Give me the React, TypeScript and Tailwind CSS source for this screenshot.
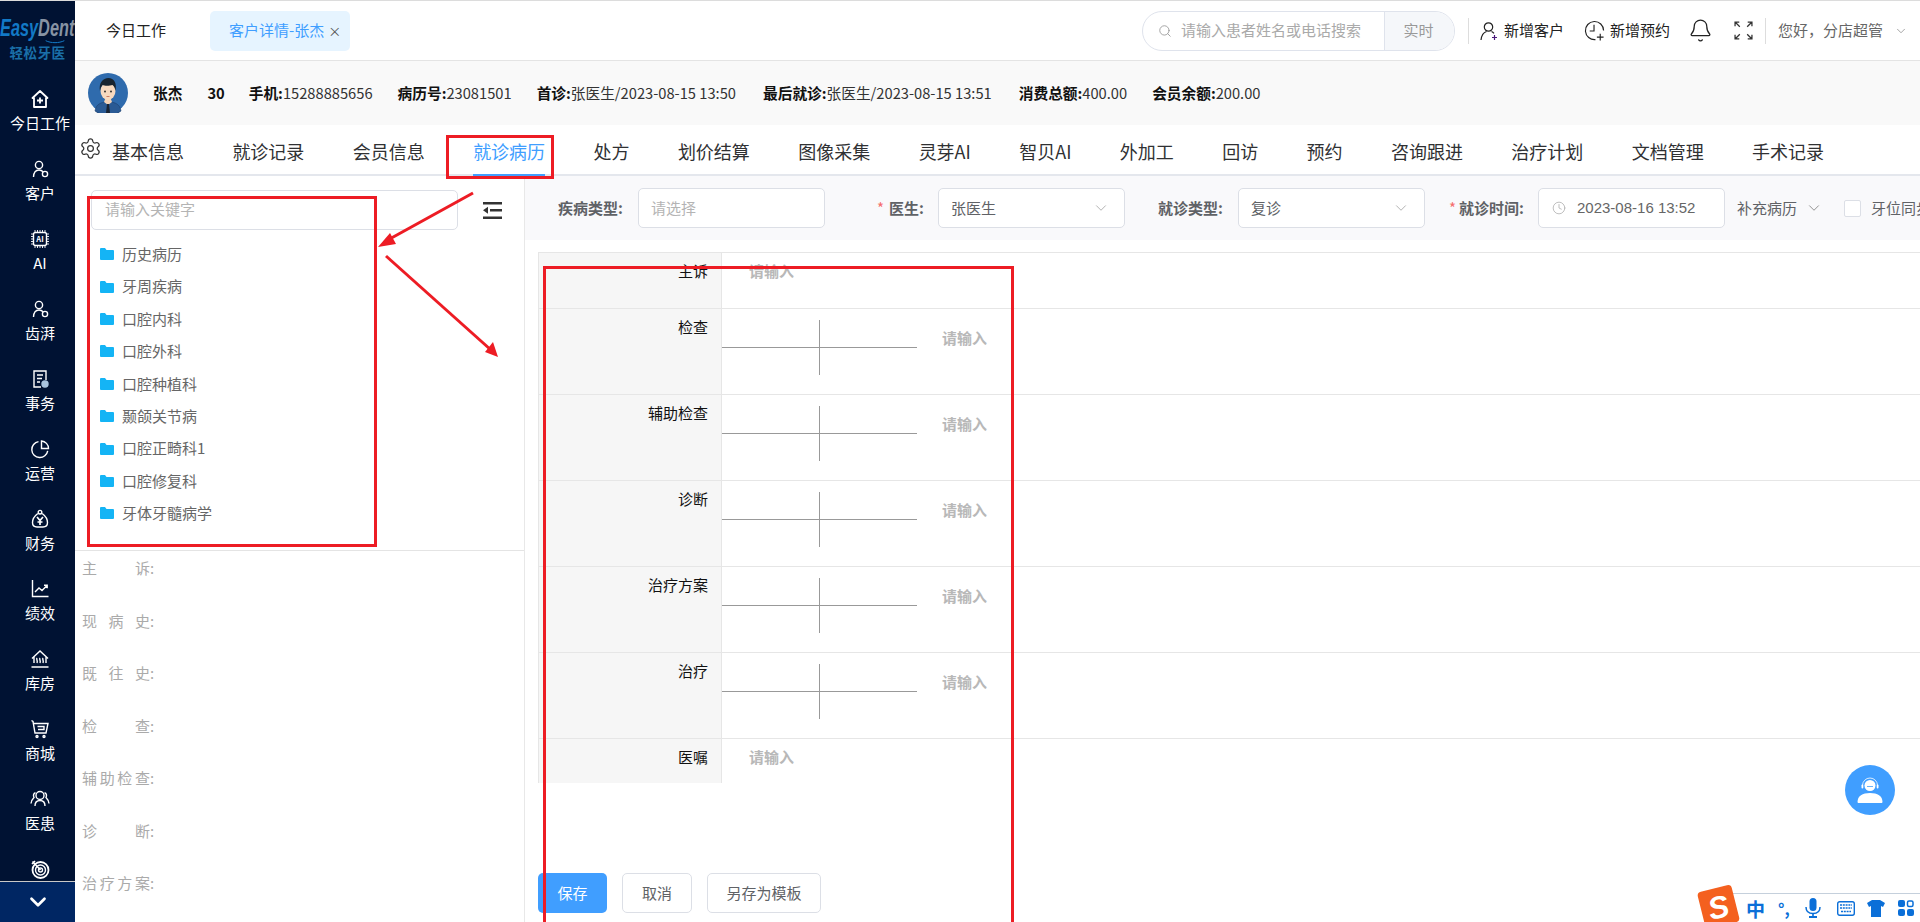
import { Bell, ChevronDown, Clock, Search, Settings } from "lucide-react";
import type { ReactNode } from "react";

const ico = "w-5 h-5 fill-none stroke-white stroke-[1.4]";

const icons: Record<string, ReactNode> = {
  home: (
    <svg viewBox="0 0 20 20" className={ico}>
      <path d="M10 2 L17.5 9 H16 V18 H4 V9 H2.5 Z" strokeWidth="1.8" strokeLinejoin="round" />
      <path d="M10 8.5v6M7 11.5h6" strokeWidth="1.8" />
    </svg>
  ),
  user: (
    <svg viewBox="0 0 20 20" className={ico}>
      <circle cx="9" cy="6" r="3.6" />
      <path d="M3.5 18c.2-4 2.2-7 5.5-7 2 0 3.2.8 4 1.8" />
      <circle cx="15" cy="15" r="2.6" />
    </svg>
  ),
  ai: (
    <svg viewBox="0 0 20 20" className={ico}>
      <rect x="3.5" y="3.5" width="13" height="13" rx="2" />
      <path
        d="M5 1v2M7.5 1v2M10 1v2M12.5 1v2M15 1v2M5 17v2M7.5 17v2M10 17v2M12.5 17v2M15 17v2M1 5h2M1 7.5h2M1 10h2M1 12.5h2M1 15h2M17 5h2M17 7.5h2M17 10h2M17 12.5h2M17 15h2"
        strokeWidth="0.9"
      />
      <text x="10" y="12.7" textAnchor="middle" className="fill-white stroke-0 font-bold text-[7.5px]">
        AI
      </text>
    </svg>
  ),
  doc: (
    <svg viewBox="0 0 20 20" className={ico}>
      <path d="M11 18H4V2h12v9" />
      <path d="M7 6h6M7 9.5h5M7 13h3" />
      <circle cx="15" cy="15" r="3" className="fill-[#a9c4e0] stroke-[#a9c4e0]" />
    </svg>
  ),
  pie: (
    <svg viewBox="0 0 20 20" className={ico}>
      <path d="M8.5 2.6a8 8 0 1 0 9.2 9.2" />
      <path d="M11.5 2v7.5h7a7.5 7.5 0 0 0-7-7.5z" />
    </svg>
  ),
  bag: (
    <svg viewBox="0 0 20 20" className={ico}>
      <circle cx="10" cy="3.2" r="1.8" />
      <path d="M7.8 4.5C4.5 7 2.5 10 2.5 13.5 2.5 17 4.5 18 7 18h6c2.500 0 4.500-1 4.500-4.500 0-3.500-2-6.500-5.300-9" />
      <path d="M7 8l3 3.500L13 8M10 11.500V16M7.500 13h5" strokeWidth="1.7" />
    </svg>
  ),
  chart: (
    <svg viewBox="0 0 20 20" className={ico}>
      <path d="M2.500 1v16.500H18.500" />
      <path d="M5 13l4-4 3 2.500 5-5M14 6.200h3.200v3" />
    </svg>
  ),
  store: (
    <svg viewBox="0 0 20 20" className={ico}>
      <path d="M2 9.500 10 2l8 7.500M4 8v6M16 8v6M1.500 18h17" />
      <path d="M7 9c-1 1.500 1 2.500 0 5M10 9c-1 1.500 1 2.500 0 5M13 9c-1 1.500 1 2.500 0 5" />
    </svg>
  ),
  cart: (
    <svg viewBox="0 0 20 20" className={ico}>
      <path d="M1.500 1.500 3 2.500 5 14h11l2-9.500H4" />
      <path d="M7.500 7.500h6.500v3H8" />
      <circle cx="7" cy="17.500" r="1" />
      <circle cx="14" cy="17.500" r="1" />
    </svg>
  ),
  team: (
    <svg viewBox="0 0 20 20" className={ico}>
      <circle cx="10" cy="6.500" r="4" />
      <path d="M5 17c0-3.500 2-5.500 5-5.500s5 2 5 5.500" />
      <path d="M5.500 3.800C3.500 4.200 3 6.500 4 8.500 2.500 10 1.200 12 1 14.500M14.500 3.800c2 .4 2.500 2.700 1.500 4.700 1.500 1.500 2.800 3.500 3 6" />
    </svg>
  ),
  target: (
    <svg viewBox="0 0 20 20" className={ico}>
      <circle cx="10.500" cy="11" r="8" strokeWidth="1.800" />
      <circle cx="10.500" cy="11" r="5" />
      <circle cx="10.500" cy="11" r="2" />
      <path d="M2.500 2.500 10.500 11M2 5l3-3" strokeWidth="1.600" />
    </svg>
  ),
};

const navItems = [
  ["home", "今日工作"],
  ["user", "客户"],
  ["ai", "AI"],
  ["user", "齿湃"],
  ["doc", "事务"],
  ["pie", "运营"],
  ["bag", "财务"],
  ["chart", "绩效"],
  ["store", "库房"],
  ["cart", "商城"],
  ["team", "医患"],
];

const tabs = [
  "基本信息",
  "就诊记录",
  "会员信息",
  "就诊病历",
  "处方",
  "划价结算",
  "图像采集",
  "灵芽AI",
  "智贝AI",
  "外加工",
  "回访",
  "预约",
  "咨询跟进",
  "治疗计划",
  "文档管理",
  "手术记录",
];

const folders = ["历史病历", "牙周疾病", "口腔内科", "口腔外科", "口腔种植科", "颞颌关节病", "口腔正畸科1", "口腔修复科", "牙体牙髓病学"];
const history = ["主诉", "现病史", "既往史", "检查", "辅助检查", "诊断", "治疗方案"];
const chartRows = ["检查", "辅助检查", "诊断", "治疗方案", "治疗"];

const Sidebar = () => (
  <aside className="w-[75px] shrink-0 bg-[#001233] flex flex-col overflow-hidden">
    <div className="h-[74px] shrink-0 pt-[14px]">
      <div className="origin-left scale-x-[0.68] text-[24px] leading-[25px] font-bold italic whitespace-nowrap [font-family:'Liberation_Sans',sans-serif]">
        <span className="text-[#1279c6]">Easy</span>
        <span className="text-[#8793a3]">Dent</span>
      </div>
      <svg viewBox="0 0 30 6" className="w-[28px] h-[4px] ml-[41px] fill-none stroke-[#1279c6] stroke-[1.5]">
        <path d="M1 1c8 4 20 4 28 0" />
      </svg>
      <div className="text-[#1a6fa8] text-[13.500px] leading-[14px] font-bold text-center tracking-[0.5px] mt-[1px]">轻松牙医</div>
    </div>
    <nav className="flex-1 overflow-hidden pl-[5px]">
      {navItems.map(([icon, label]) => (
        <div key={label} className="h-[70px] flex flex-col items-center pt-[14px] text-white text-[15px]">
          {icons[icon]}
          <span className="leading-5 mt-1">{label}</span>
        </div>
      ))}
      <div className="h-[70px] flex flex-col items-center pt-[14px]">{icons.target}</div>
    </nav>
    <div className="h-[41px] shrink-0 bg-[#002663] border-t border-[#c8c8c8] flex items-center justify-center">
      <ChevronDown className="w-[26px] h-[26px] text-white" strokeWidth={2.5} />
    </div>
  </aside>
);

const Header = () => (
  <header className="h-[60px] shrink-0 border-b border-[#e4e4e4] flex items-center bg-white">
    <span className="ml-[31px] text-[15px] text-[#222] w-[104px]">今日工作</span>
    <div className="w-[140px] h-10 rounded-[5px] bg-[#e6f4ff] flex items-center pl-[19px] text-[15px] text-[#409eff]">
      客户详情-张杰
      <span className="ml-[4px] text-[#555] text-[13px] leading-none">×</span>
    </div>
    <div className="ml-[792px] w-[313px] h-10 rounded-[20px] border border-[#dfe3ec] flex overflow-hidden shrink-0">
      <div className="flex-1 flex items-center pl-[15px] text-[15px] text-[#aaa]">
        <Search className="w-[14px] h-[14px] text-[#999] mr-[9px]" strokeWidth={1.5} />
        请输入患者姓名或电话搜索
      </div>
      <div className="w-[70px] bg-[#f5f7fa] border-l border-[#dfe3ec] text-[15px] text-[#999] flex items-center justify-center pr-[2px]">实时</div>
    </div>
    <div className="ml-[13px] w-px h-[26px] bg-[#ddd]" />
    <svg viewBox="0 0 20 20" className="ml-[10px] w-5 h-5 fill-none stroke-[#222] stroke-[1.2] shrink-0">
      <circle cx="9.500" cy="6" r="4.200" />
      <path d="M2 19c.5-4.500 2.500-7.500 5.500-8.500M12.500 10.500c1 .4 1.800 1 2.500 1.800" />
      <path d="M15.500 14v5M13 16.500h5" className="stroke-[#4b1a7a]" />
    </svg>
    <span className="ml-[5px] text-[15px] text-[#222] whitespace-nowrap">新增客户</span>
    <svg viewBox="0 0 22 22" className="ml-[20px] w-[21px] h-[21px] fill-none stroke-[#222] stroke-[1.2] shrink-0">
      <path d="M12 20.500A9.500 9.500 0 1 1 20.500 11" />
      <path d="M10.500 5v6.500H6M17 14.500v7M13.500 18h7" />
    </svg>
    <span className="ml-[5px] text-[15px] text-[#222] whitespace-nowrap">新增预约</span>
    <Bell className="ml-[18px] w-[25px] h-[27px] text-[#222] shrink-0" strokeWidth={1.2} />
    <svg viewBox="0 0 18 18" className="ml-[21px] w-[19px] h-[19px] fill-none stroke-[#333] stroke-[1.2] shrink-0">
      <path d="M1 5V1h4M1 1l4.500 4.500M17 5V1h-4M17 1l-4.500 4.500M1 13v4h4M1 17l4.500-4.500M17 13v4h-4M17 17l-4.500-4.500" />
    </svg>
    <div className="ml-[12px] w-px h-[26px] bg-[#ddd]" />
    <span className="ml-[12px] text-[15px] text-[#666] whitespace-nowrap">您好，分店超管</span>
    <ChevronDown className="ml-[11px] w-[14px] h-[14px] text-[#888]" strokeWidth={1.3} />
  </header>
);

const Avatar = () => (
  <svg viewBox="0 0 40 40" className="w-10 h-10 shrink-0">
    <circle cx="20" cy="20" r="20" fill="#2f6bad" />
    <path d="M7 38c1-7 6-9 13-9s12 2 13 9a20 20 0 0 1-26 0z" fill="#2a5a94" stroke="#1d3f6e" strokeWidth="0.6" />
    <path d="M16 29l4 3 4-3-1.500-4h-5z" fill="#f3d3b8" />
    <path d="M19 31h2l1 9h-4z" fill="#1a2433" />
    <ellipse cx="20" cy="18" rx="7.500" ry="9" fill="#f7d9bf" />
    <path d="M12 18c-1.500-8 3-13 8.500-13 5.500 0 8.500 5 7 13-.5-3-1.500-5-3-6-3 1-8 1-10 0-1 1-2 3-2.500 6z" fill="#18242f" />
    <circle cx="17" cy="18.500" r="0.900" fill="#222" />
    <circle cx="23" cy="18.500" r="0.900" fill="#222" />
    <path d="M18.500 23.500h3" stroke="#b5533c" strokeWidth="0.700" />
  </svg>
);

const Info = ({ label, value, ml }: { label: string; value: string; ml: string }) => (
  <span className={`${ml} whitespace-nowrap`}>
    <b className="font-bold text-[#111]">{label}</b>
    <span className="text-[#333]">{value}</span>
  </span>
);

const PatientBar = () => (
  <div className="h-16 shrink-0 bg-[#f9f9f9] flex items-center pl-[13px] text-[14.700px]">
    <Avatar />
    <b className="ml-[25px] font-bold text-[#111]">张杰</b>
    <b className="ml-[25px] font-bold text-[#111]">30</b>
    <Info ml="ml-[24px]" label="手机:" value="15288885656" />
    <Info ml="ml-[25px]" label="病历号:" value="23081501" />
    <Info ml="ml-[25px]" label="首诊:" value="张医生/2023-08-15 13:50" />
    <Info ml="ml-[27px]" label="最后就诊:" value="张医生/2023-08-15 13:51" />
    <Info ml="ml-[27px]" label="消费总额:" value="400.00" />
    <Info ml="ml-[25px]" label="会员余额:" value="200.00" />
  </div>
);

const TabBar = () => (
  <div className="h-[51px] shrink-0 border-b-2 border-[#e4e7ed] flex text-[18px] text-[#303133] bg-white">
    <div className="w-[37px] flex items-center pl-[4px] pb-[2px] shrink-0">
      <Settings className="w-[23px] h-[23px] text-[#333]" strokeWidth={1.3} />
    </div>
    {tabs.map((t, i) => (
      <div
        key={t}
        className={
          i === 3
            ? "mx-[24.200px] h-[51px] whitespace-nowrap leading-[52px] text-[#409eff] border-b-2 border-[#409eff]"
            : i === 0
              ? "mr-[24.200px] h-[49px] whitespace-nowrap leading-[52px]"
              : "mx-[24.200px] h-[49px] whitespace-nowrap leading-[52px]"
        }
      >
        {t}
      </div>
    ))}
  </div>
);

const Folder = () => (
  <svg viewBox="0 0 14 12" className="w-[14px] h-3 shrink-0 fill-[#14b4f5]">
    <path d="M0 1a1 1 0 0 1 1-1h4l1.500 2H13a1 1 0 0 1 1 1v8a1 1 0 0 1-1 1H1a1 1 0 0 1-1-1z" />
  </svg>
);

const LeftPanel = () => (
  <div className="w-[450px] shrink-0 border-r border-[#e8e8e8] flex flex-col">
    <div className="h-[375px] shrink-0 border-b border-[#e4e4e4] pt-[14px]">
      <div className="flex items-center pl-4">
        <div className="w-[367px] h-10 border border-[#dcdfe6] rounded-[5px] flex items-center pl-[13px] pb-[2px] text-[15px] text-[#b4b4b4]">请输入关键字</div>
        <svg viewBox="0 0 19 17" className="ml-[25px] w-[19px] h-[17px] fill-[#333] shrink-0">
          <path d="M0 0h19v2.500H0zM7 7h12v2.500H7zM0 14.500h19V17H0zM0 8.200l5-3.500v7z" />
        </svg>
      </div>
      <ul className="mt-[8px] pl-[25px]">
        {folders.map((f) => (
          <li key={f} className="h-[32.400px] flex items-center gap-2 text-[15px] text-[#666]">
            <Folder />
            {f}
          </li>
        ))}
      </ul>
    </div>
    <div className="pl-[7px] pt-[6px] flex flex-col gap-[31.500px] text-[15px] leading-[21px] text-[#aaa]">
      {history.map((h) => (
        <div key={h} className="flex">
          <span className="w-[68px] [text-align-last:justify]">{h}</span>
          <span>:</span>
        </div>
      ))}
    </div>
  </div>
);

const Field = ({ children, className }: { children: ReactNode; className: string }) => (
  <div className={`h-10 shrink-0 bg-white border border-[#dcdfe6] rounded-[5px] flex items-center pl-[12px] text-[15px] ${className}`}>{children}</div>
);

const FormBar = () => (
  <div className="h-16 shrink-0 bg-[#f9f9fb] flex items-center whitespace-nowrap overflow-hidden text-[15px] text-[#606266]">
    <span className="ml-[33px] w-[64px] shrink-0 font-bold">疾病类型:</span>
    <Field className="ml-4 w-[187px] text-[#b4b4b4]">请选择</Field>
    <span className="ml-[52px] text-[#f56c6c] w-[12px] shrink-0">*</span>
    <span className="w-[34px] shrink-0 font-bold">医生:</span>
    <Field className="ml-[15px] w-[187px] justify-between pr-[14px]">
      张医生
      <ChevronDown className="w-[18px] h-[18px] text-[#aaa]" strokeWidth={1.2} />
    </Field>
    <span className="ml-[33px] w-[64px] shrink-0 font-bold">就诊类型:</span>
    <Field className="ml-4 w-[187px] justify-between pr-[14px]">
      复诊
      <ChevronDown className="w-[18px] h-[18px] text-[#aaa]" strokeWidth={1.2} />
    </Field>
    <span className="ml-[24px] text-[#f56c6c] w-[10px] shrink-0">*</span>
    <span className="w-[64px] shrink-0 font-bold">就诊时间:</span>
    <Field className="ml-[15px] w-[187px] pl-[13px]">
      <Clock className="w-[14px] h-[14px] text-[#aaa] mr-[11px]" strokeWidth={1.3} />
      <span className="text-[#666] [font-family:'Liberation_Sans',sans-serif]">2023-08-16 13:52</span>
    </Field>
    <span className="ml-3 shrink-0">补充病历</span>
    <ChevronDown className="ml-[8px] w-[18px] h-[18px] text-[#888] shrink-0" strokeWidth={1.2} />
    <div className="ml-[21px] w-[17px] h-[17px] bg-white border border-[#dcdfe6] rounded-[2px] shrink-0" />
    <span className="ml-[10px] shrink-0">牙位同步</span>
  </div>
);

const ToothCross = () => (
  <div className="mt-[11px] w-[195px] h-[55px] grid grid-cols-2 grid-rows-2 shrink-0">
    <div className="border-r border-b border-[#999]" />
    <div className="border-b border-[#999]" />
    <div className="border-r border-[#999]" />
    <div />
  </div>
);

const RowLabel = ({ text }: { text: string }) => (
  <div className="w-[184px] shrink-0 bg-[#f6f6f6] border-l border-r border-[#e6e6e6] text-right pr-[13px] pt-[8px] leading-5 text-[15px] text-[#111]">{text}</div>
);

const ChartTable = () => (
  <div className="ml-[13px] mt-3">
    <div className="h-[56px] flex border-t border-[#e6e6e6]">
      <RowLabel text="主诉" />
      <span className="ml-[27px] mt-[8px] leading-5 text-[15px] font-bold text-[#b8b8b8]">请输入</span>
    </div>
    {chartRows.map((r) => (
      <div key={r} className="h-[86px] flex border-t border-[#e6e6e6]">
        <RowLabel text={r} />
        <ToothCross />
        <span className="ml-[25px] mt-[19px] leading-5 text-[15px] font-bold text-[#b8b8b8]">请输入</span>
      </div>
    ))}
    <div className="h-[45px] flex border-t border-[#e6e6e6]">
      <RowLabel text="医嘱" />
      <span className="ml-[27px] mt-[8px] leading-5 text-[15px] font-bold text-[#b8b8b8]">请输入</span>
    </div>
  </div>
);

const Actions = () => (
  <div className="ml-[13px] mt-[90px] flex text-[15px] text-[#606266]">
    <button className="w-[69px] h-10 bg-[#409eff] text-white rounded-[5px]">保存</button>
    <button className="ml-[15px] w-[70px] h-10 border border-[#dcdfe6] rounded-[5px] bg-white">取消</button>
    <button className="ml-[15px] w-[114px] h-10 border border-[#dcdfe6] rounded-[5px] bg-white">另存为模板</button>
  </div>
);

// 截图上的红色标注
const Annotations = () => (
  <>
    <div className="absolute left-[446px] top-[134px] w-[108px] h-[44px] border-[3px] border-[#ed1c24]" />
    <div className="absolute left-[87px] top-[195px] w-[290px] h-[351px] border-[3px] border-[#ed1c24]" />
    <div className="absolute left-[543px] top-[265px] w-[471px] h-[700px] border-[3px] border-[#ed1c24]" />
    <svg viewBox="0 0 1920 922" className="absolute left-0 top-0 w-[1920px] h-[922px] pointer-events-none">
      <path d="M473 192 386 240" stroke="#ed1c24" strokeWidth="3" />
      <path d="M378 246 390 232 396 243z" fill="#ed1c24" />
      <path d="M386 255 491 349" stroke="#ed1c24" strokeWidth="3" />
      <path d="M498 356 485 351 493 341z" fill="#ed1c24" />
    </svg>
  </>
);

const SupportButton = () => (
  <div className="absolute left-[1845px] top-[764px] w-[50px] h-[50px] rounded-full bg-[#409eff] flex items-center justify-center">
    <svg viewBox="0 0 28 28" className="w-[28px] h-[28px]">
      <circle cx="14" cy="9.500" r="5.500" fill="white" />
      <path d="M6.500 11V9.500a7.500 7.500 0 0 1 15 0V11" fill="none" stroke="white" strokeWidth="0.800" />
      <rect x="5.500" y="8.500" width="1.800" height="4" rx="0.900" fill="white" />
      <rect x="20.700" y="8.500" width="1.800" height="4" rx="0.900" fill="white" />
      <path d="M11 10.500h6" stroke="#409eff" strokeWidth="0.800" />
      <path d="M1.500 26c0-6 5-9 12.500-9s12.500 3 12.500 9c0 1-1 1-1.500 1H3c-.5 0-1.500 0-1.500-1z" fill="white" />
    </svg>
  </div>
);

const ImeBar = () => (
  <div className="absolute right-0 bottom-0 w-[188px] h-[29px] bg-white border-t border-l border-[#c5d0dc] flex items-center text-[#0b6fd8]">
    <div className="absolute -left-[32px] -top-[6px] w-[35px] h-[38px] bg-[#f4601f] rounded-[4px] -rotate-[14deg] flex items-center justify-center text-white text-[31px] leading-none font-bold italic [font-family:'Liberation_Sans',sans-serif]">
      S
    </div>
    <span className="ml-[13px] text-[19px] leading-none font-bold">中</span>
    <span className="ml-[13px] text-[16px] leading-none font-bold">°,</span>
    <svg viewBox="0 0 16 20" className="ml-[15px] w-[16px] h-5 fill-[#0b6fd8]">
      <rect x="4.500" y="0" width="7" height="13" rx="3.500" />
      <path d="M1 9c0 4.500 3 6.500 7 6.500s7-2 7-6.500" fill="none" stroke="#0b6fd8" strokeWidth="1.500" />
      <path d="M7.200 15h1.600v3H12v2H4v-2h3.200z" />
    </svg>
    <svg viewBox="0 0 18 15" className="ml-[16px] w-[18px] h-[15px]">
      <rect x="0.700" y="0.700" width="16.600" height="13.600" rx="2" fill="none" stroke="#0b6fd8" strokeWidth="1.400" />
      <path d="M3 4h12M3 7h12M4 10.500h10" stroke="#0b6fd8" strokeWidth="1.600" strokeDasharray="2 0.800" />
    </svg>
    <svg viewBox="0 0 18 17" className="ml-[12px] w-[18px] h-[17px] fill-[#0b6fd8]">
      <path d="M5 0h8l5 3-2 4-2-1v11H4V6L2 7 0 3z" />
    </svg>
    <svg viewBox="0 0 16 16" className="ml-[13px] w-4 h-4 fill-[#0b6fd8]">
      <rect width="7" height="7" rx="2" />
      <rect x="9.500" y="1" width="5.500" height="5.500" rx="1.500" fill="none" stroke="#0b6fd8" strokeWidth="1.500" />
      <rect y="9" width="7" height="7" rx="2" />
      <rect x="9" y="9" width="7" height="7" rx="2" />
    </svg>
  </div>
);

export default function App() {
  return (
    <div className="relative w-[1920px] h-[922px] overflow-hidden bg-white border-t border-[#dcdcdc] flex [font-family:'Noto_Sans_CJK_SC','Noto_Sans',sans-serif]">
      <Sidebar />
      <main className="flex-1 min-w-0 flex flex-col">
        <Header />
        <PatientBar />
        <TabBar />
        <div className="flex-1 flex min-h-0">
          <LeftPanel />
          <div className="flex-1 min-w-0 flex flex-col overflow-hidden">
            <FormBar />
            <ChartTable />
            <Actions />
          </div>
        </div>
      </main>
      <Annotations />
      <SupportButton />
      <ImeBar />
    </div>
  );
}
